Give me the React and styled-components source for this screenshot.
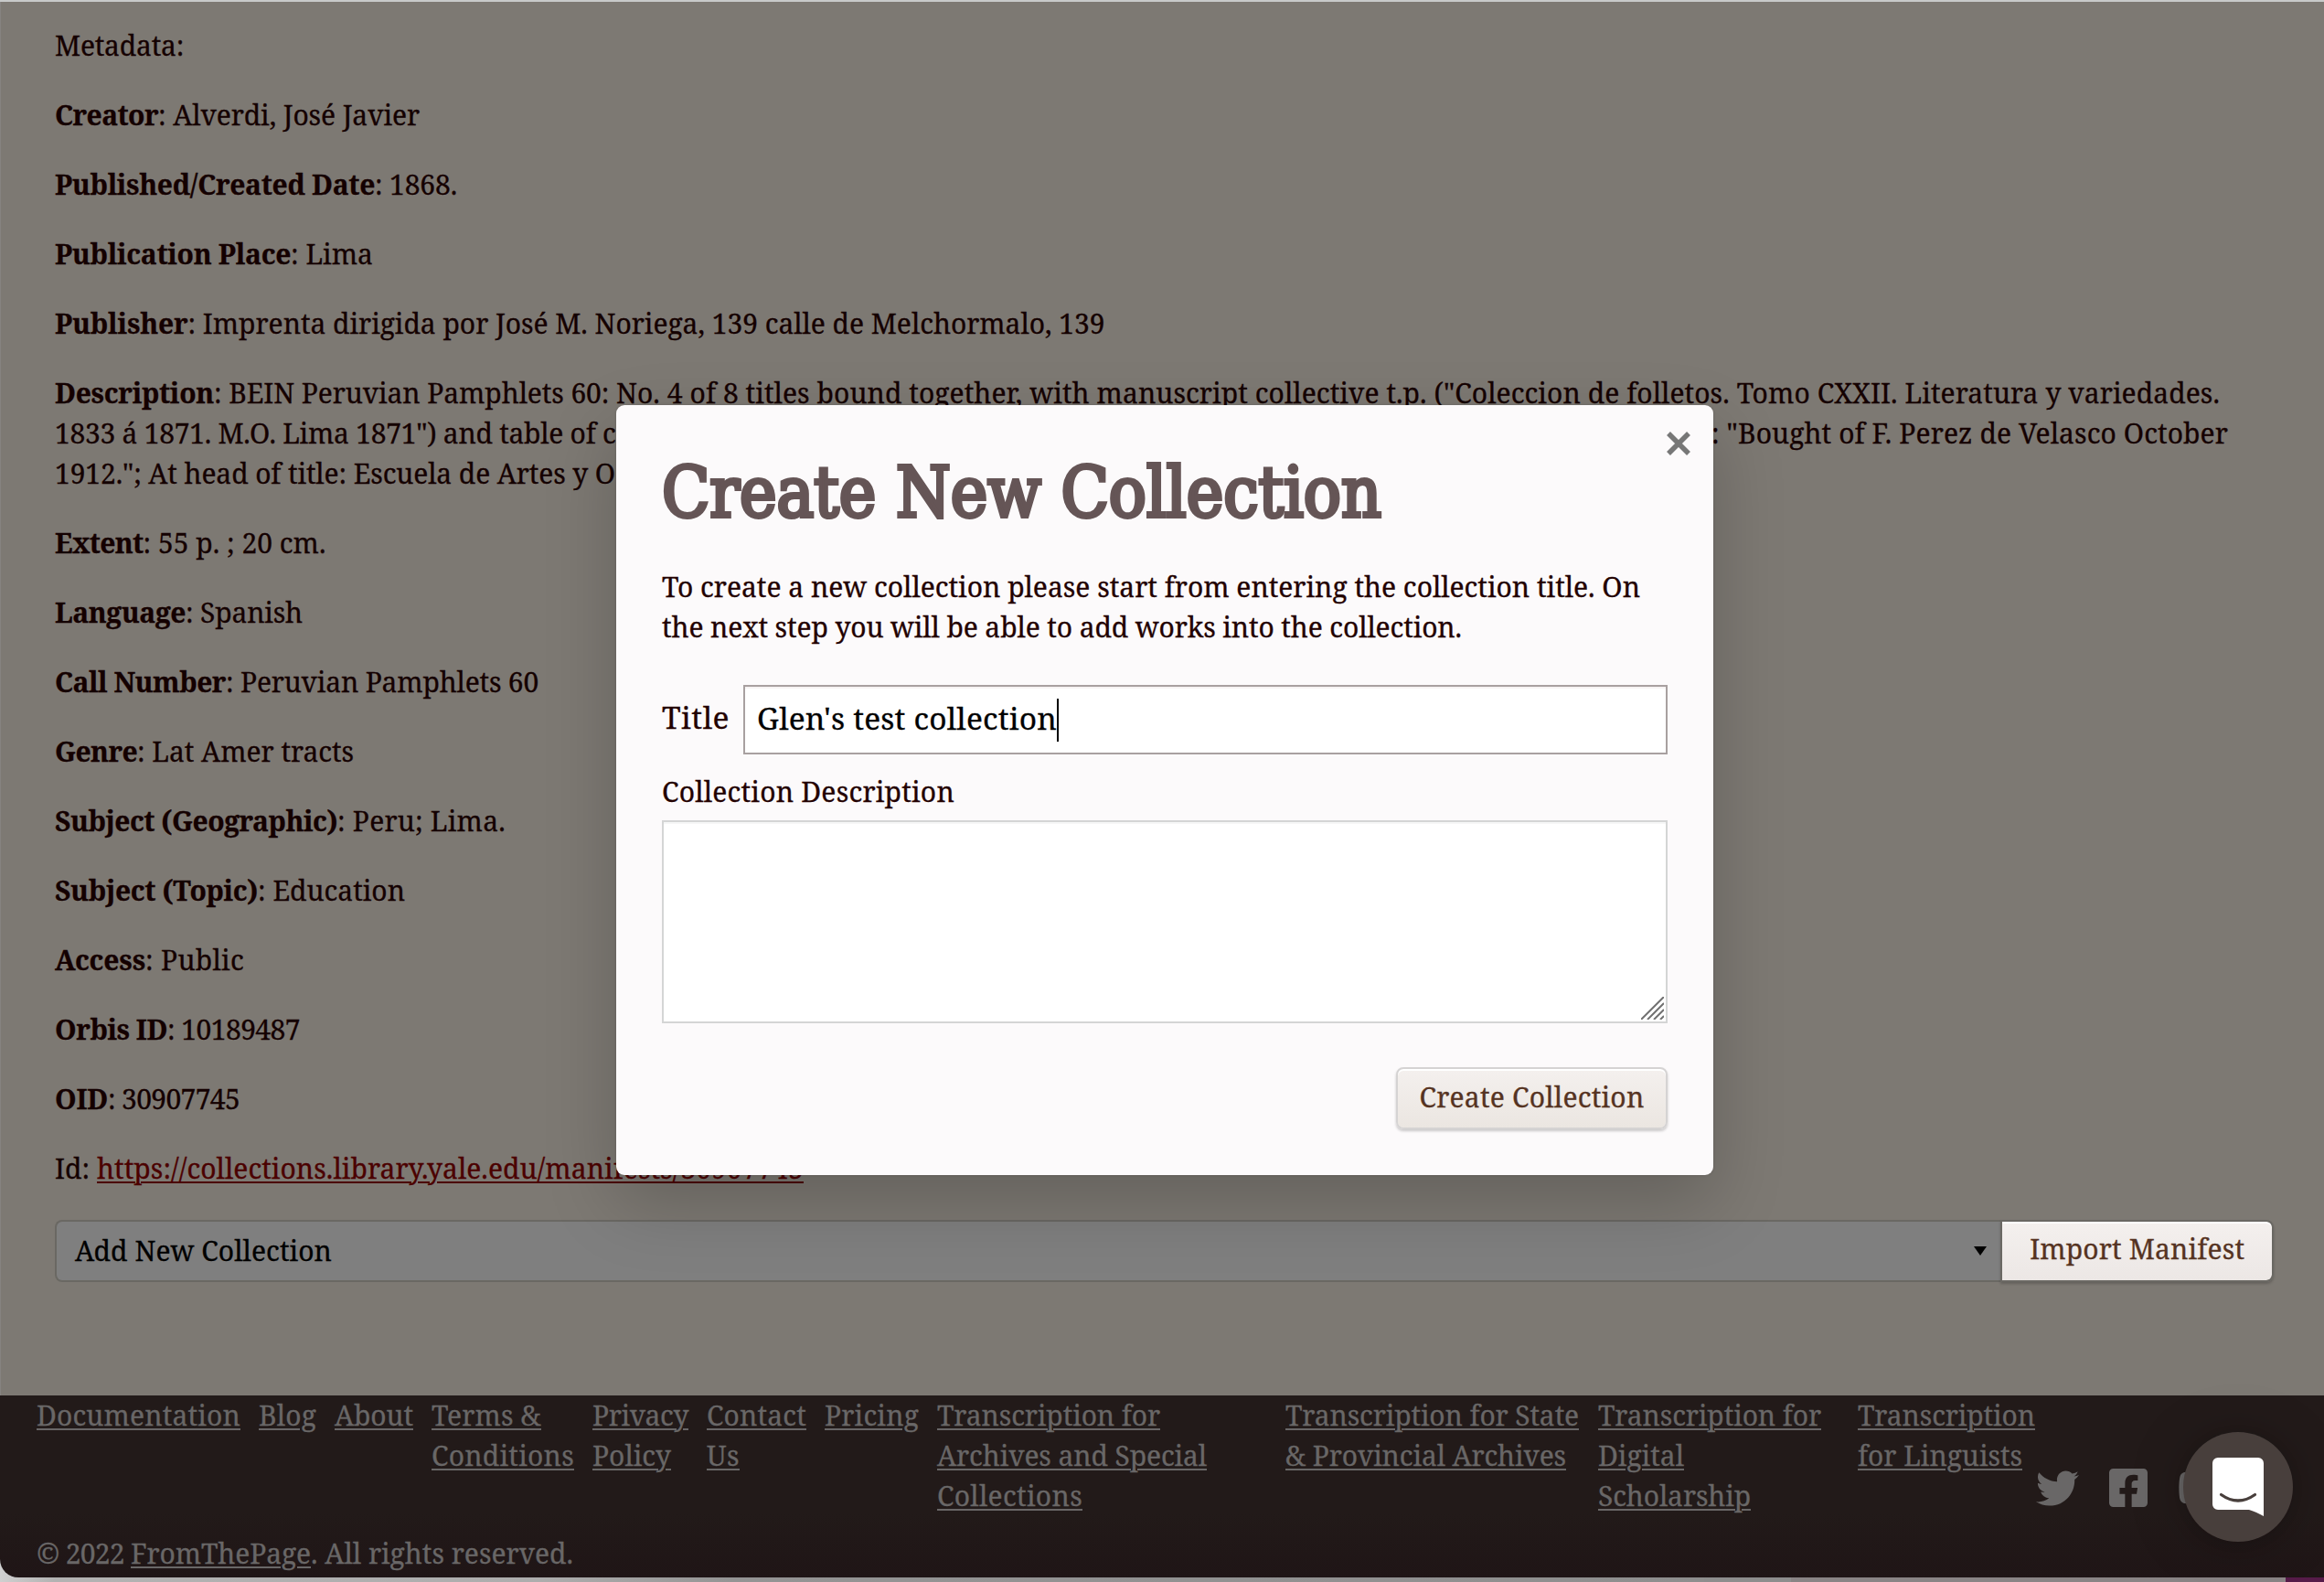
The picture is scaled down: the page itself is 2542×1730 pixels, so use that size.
import React, { useLayoutEffect, useRef, useState } from 'react';
import styled, { createGlobalStyle, css } from 'styled-components';
import { FaTwitter, FaFacebookSquare, FaYoutube } from 'react-icons/fa';

const Global = createGlobalStyle`
  *, *::before, *::after { box-sizing: border-box; }
  body { margin: 0; overflow: hidden; background: #b0b0b0; }
`;

const serif = css`
  font-family: "Noto Serif", "DejaVu Serif Condensed", "DejaVu Serif", serif;
`;

const underline = css`
  text-decoration: underline;
  text-decoration-thickness: 2px;
  text-underline-offset: 3px;
`;

const Text = styled.span`
  display: inline-block;
  white-space: pre;
  font-weight: ${(p) => (p.$bold ? 700 : 400)};
  ${(p) => p.$link && underline}
`;

/* Spreads its letters so that the text takes exactly `w` pixels. */
function Fit({ w, bold, link, children }) {
  const ref = useRef(null);
  const [spacing, setSpacing] = useState(0);
  useLayoutEffect(() => {
    const natural = ref.current.getBoundingClientRect().width;
    setSpacing((w - natural) / children.length);
  }, []);
  return (
    <Text ref={ref} $bold={bold} $link={link} style={{ letterSpacing: `${spacing}px` }}>
      {children}
    </Text>
  );
}

const Page = styled.div`
  ${serif}
  position: relative;
  display: flex;
  flex-direction: column;
  width: 2542px;
  height: 1730px;
  border-top: 2px solid #c8caca;
  font-size: 30px;
  line-height: 44px;
  color: #140000;
  -webkit-text-stroke: 0.3px currentColor;
  overflow: hidden;
`;

const Main = styled.main`
  display: flex;
  flex-direction: column;
  height: 1524px;
  padding: 26px 55px 0 59px;
  background: #7d7973;
  border-left: 1px solid #868380;
`;

const Field = styled.p`
  margin: 0 0 32px;
  white-space: nowrap;
`;

const Line = styled.span`
  display: flex;
  height: 44px;
`;

const Covered = styled.span`
  flex: 0 0 auto;
  width: ${(p) => p.$w}px;
  overflow: hidden;
`;

const SourceLink = styled.a`
  color: #4b0000;
`;

const ImportRow = styled.div`
  display: flex;
  margin-top: 2px;
  height: 68px;
`;

const Select = styled.div`
  display: flex;
  align-items: center;
  justify-content: space-between;
  width: 2130px;
  padding: 0 15px 0 20px;
  border: 2px solid #6a6863;
  border-right: 0;
  border-radius: 8px 0 0 8px;
  background: #7f7f7f;
  color: #000;
`;

const Caret = styled.span`
  border: 7px solid transparent;
  border-top: 10px solid #000;
  border-bottom: 0;
`;

const Button = styled.button`
  ${serif}
  display: flex;
  justify-content: center;
  align-items: center;
  width: ${(p) => p.$w}px;
  height: 68px;
  padding: 0 0 ${(p) => p.$lift}px;
  border: 2px solid ${(p) => p.$border};
  border-radius: ${(p) => p.$radius};
  background: linear-gradient(#f4f0ee, ${(p) => p.$end});
  background-clip: padding-box;
  box-shadow: inset 0 2px 0 #fff, 0 2px 3px rgba(0, 0, 0, 0.2);
  font-size: 30px;
  line-height: 44px;
  color: #553322;
  -webkit-text-stroke: 0.3px currentColor;
`;

const Footer = styled.footer`
  height: 199px;
  padding-left: 40px;
  border-radius: 0 0 0 20px;
  background: linear-gradient(#221a19 65%, #1f1516);
  color: #696767;
`;

const Nav = styled.nav`
  display: flex;
  height: 132px;
`;

const NavItem = styled.a`
  display: flex;
  flex-direction: column;
  align-items: flex-start;
  width: ${(p) => p.$w}px;
`;

const Social = styled.div`
  display: flex;
  align-items: center;
  gap: 33px;
  height: 48px;
  margin: 77px 0 0 1px;
  svg { display: block; flex: none; }
`;

const Copyright = styled.div`
  margin-top: 19px;
  white-space: nowrap;
`;

const Backdrop = styled.div`
  background: linear-gradient(90deg, #d0d0d0, #b2b2b2 60px);
`;

const Behind = styled.div`
  display: grid;
  grid-template-columns: 96px 1768px 95px 541px 42px;
  height: 30px;
  margin-top: -25px;
  position: relative;
  z-index: -1;
  background: #a9a9a9;
`;

const Pane = styled.div`
  background: ${(p) => p.$bg};
  border-right: ${(p) => (p.$rule ? '1px solid #8e8e8e' : '0')};
`;

const Modal = styled.section`
  position: absolute;
  left: 674px;
  top: 441px;
  width: 1200px;
  height: 842px;
  padding: 56px 50px 50px;
  display: flex;
  flex-direction: column;
  border-radius: 9px;
  background: #fcfafb;
  box-shadow: 0 30px 80px rgba(0, 0, 0, 0.2), 0 0 3px rgba(0, 0, 0, 0.15);
  color: #220000;
`;

const Close = styled.button`
  position: absolute;
  top: 27px;
  right: 24px;
  padding: 0;
  border: 0;
  background: none;
  line-height: 0;
`;

const Heading = styled.h1`
  margin: 0 0 41px;
  font: 400 76px/80px "DejaVu Serif Condensed", "DejaVu Serif", serif;
  color: #655556;
  -webkit-text-stroke: 4px #655556;
`;

const Intro = styled.p`
  display: flex;
  flex-direction: column;
  align-items: flex-start;
  margin: 0 0 41px;
`;

const TitleRow = styled.label`
  display: flex;
  height: 76px;
  font-size: 33.5px;
  line-height: 71px;
`;

const TitleLabel = styled.span`
  width: 89px;
`;

const Input = styled.div`
  flex: 1;
  display: flex;
  align-items: center;
  padding: 0 0 4px 13px;
  border: 2px solid #a8a0a0;
  background: #fff;
  box-shadow: inset 0 2px 0 #f7f3f3;
  color: #000;
`;

const TextCursor = styled.span`
  width: 2px;
  height: 47px;
  margin-top: 4px;
  background: #000;
`;

const Caption = styled.div`
  margin: 19px 0 9px;
`;

const Area = styled.div`
  display: flex;
  align-items: flex-end;
  justify-content: flex-end;
  height: 222px;
  padding: 2px;
  border: 2px solid #d4d5d5;
  background: #fff;
  box-shadow: inset 0 2px 0 #f6f6f6;
  svg { display: block; }
`;

const Actions = styled.div`
  display: flex;
  justify-content: flex-end;
  margin-top: 48px;
`;

const Chat = styled.button`
  position: absolute;
  left: 2388px;
  top: 1564px;
  width: 120px;
  height: 120px;
  display: flex;
  align-items: center;
  justify-content: center;
  padding: 0;
  border: 0;
  border-radius: 50%;
  background: #483f3c;
  box-shadow: 0 2px 12px rgba(0, 0, 0, 0.12), 0 4px 64px rgba(0, 0, 0, 0.2);
`;

const before = [
  ['Creator', 113, ': Alverdi, José Javier', 286],
  ['Published/Created Date', 350, ': 1868.', 90],
  ['Publication Place', 258, ': Lima', 90],
  ['Publisher', 145.5, ': Imprenta dirigida por José M. Noriega, 139 calle de Melchormalo, 139', 1003],
];

const after = [
  ['Extent', 96.5, ': 55 p. ; 20 cm.', 200],
  ['Language', 143, ': Spanish', 128],
  ['Call Number', 187, ': Peruvian Pamphlets 60', 342],
  ['Genre', 90, ': Lat Amer tracts', 237],
  ['Subject (Geographic)', 309, ': Peru; Lima.', 184],
  ['Subject (Topic)', 222, ': Education', 161],
  ['Access', 99, ': Public', 108],
  ['Orbis ID', 123, ': 10189487', 145],
  ['OID', 58, ': 30907745', 144],
];

const links = [
  [243, ['Documentation', 223]],
  [83, ['Blog', 63]],
  [106, ['About', 86]],
  [176, ['Terms &', 120], ['Conditions', 156]],
  [125, ['Privacy', 105], ['Policy', 86]],
  [129, ['Contact', 109], ['Us', 36]],
  [123, ['Pricing', 103]],
  [381, ['Transcription for', 244], ['Archives and Special', 295], ['Collections', 159]],
  [342, ['Transcription for State', 321], ['& Provincial Archives', 307]],
  [284, ['Transcription for', 244], ['Digital', 94], ['Scholarship', 167]],
  [194, ['Transcription', 194], ['for Linguists', 180]],
];

const MetaField = ({ item: [label, lw, value, vw] }) => (
  <Field>
    <Fit bold w={lw}>{label}</Fit>
    <Fit w={vw}>{value}</Fit>
  </Field>
);

export default function App() {
  return (
    <Page>
      <Global />
      <Main>
        <Field><Fit w={141}>Metadata:</Fit></Field>
        {before.map((item) => <MetaField key={item[0]} item={item} />)}
        <Field as="div">
          <Line>
            <Fit bold w={174}>Description</Fit>
            <Fit w={440}>{': BEIN Peruvian Pamphlets 60: '}</Fit>
            <Fit w={1754}>{'No. 4 of 8 titles bound together, with manuscript collective t.p. ("Coleccion de folletos. Tomo CXXII. Literatura y variedades.'}</Fit>
          </Line>
          <Line>
            <Fit w={599}>{'1833 á 1871. M.O. Lima 1871") and table of '}</Fit>
            <Covered $w={1213}>c</Covered>
            <Fit w={565}>{': "Bought of F. Perez de Velasco October'}</Fit>
          </Line>
          <Line>
            <Fit w={613}>{'1912."; At head of title: Escuela de Artes y O'}</Fit>
          </Line>
        </Field>
        {after.map((item) => <MetaField key={item[0]} item={item} />)}
        <Field>
          <Fit w={46}>{'Id: '}</Fit>
          <SourceLink>
            <Fit link w={773}>https://collections.library.yale.edu/manifests/30907745</Fit>
          </SourceLink>
        </Field>
        <ImportRow>
          <Select>
            <Fit w={281}>Add New Collection</Fit>
            <Caret />
          </Select>
          <Button $w={299} $lift={4} $border="#6a6863" $radius="0 8px 8px 0" $end="#ece7e5">
            <Fit w={235}>Import Manifest</Fit>
          </Button>
        </ImportRow>
      </Main>
      <Footer>
        <Nav>
          {links.map(([w, ...lines], i) => (
            <NavItem key={i} $w={w}>
              {lines.map(([text, tw]) => <Fit key={text} link w={tw}>{text}</Fit>)}
            </NavItem>
          ))}
          <Social>
            <FaTwitter size={47} />
            <FaFacebookSquare style={{ width: 42, height: 48 }} />
            <FaYoutube style={{ width: 54, height: 48 }} />
          </Social>
        </Nav>
        <Copyright>
          <Fit w={103}>{'© 2022 '}</Fit>
          <Fit link w={197}>FromThePage</Fit>
          <Fit w={287}>. All rights reserved.</Fit>
        </Copyright>
      </Footer>
      <Behind>
        <Backdrop />
        <Pane $bg="linear-gradient(90deg, #b2b2b2, #adadad 28%, #949494 40%, #8e8e8e)" $rule />
        <Pane $bg="#8d8d8d" $rule />
        <Pane $bg="#898485" />
        <Pane $bg="#561b49" />
      </Behind>
      <Modal>
        <Close aria-label="Close">
          <svg width="28" height="30" viewBox="0 0 28 30" fill="none" stroke="#777" strokeWidth="5.5">
            <path d="M3 4 25 26M25 4 3 26" />
          </svg>
        </Close>
        <Heading><Fit w={787}>Create New Collection</Fit></Heading>
        <Intro>
          <Fit w={1070}>To create a new collection please start from entering the collection title. On</Fit>
          <Fit w={875}>the next step you will be able to add works into the collection.</Fit>
        </Intro>
        <TitleRow>
          <TitleLabel><Fit w={74}>Title</Fit></TitleLabel>
          <Input>
            <Fit w={328}>Glen's test collection</Fit>
            <TextCursor />
          </Input>
        </TitleRow>
        <Caption><Fit w={320}>Collection Description</Fit></Caption>
        <Area>
          <svg width="25" height="25" viewBox="0 0 25 25" stroke="#717171" strokeWidth="2">
            <path d="M0 25 25 0M7 25 25 7M14 25 25 14M21 25 25 21" />
          </svg>
        </Area>
        <Actions>
          <Button $w={297} $lift={3} $border="#d5d3d3" $radius="8px" $end="#ebe6e1">
            <Fit w={246}>Create Collection</Fit>
          </Button>
        </Actions>
      </Modal>
      <Chat aria-label="Chat">
        <svg width="56" height="64" viewBox="0 0 56 64">
          <path d="M6 0H50a6 6 0 0 1 6 6V64Q47 59 40 57H6a6 6 0 0 1-6-6V6a6 6 0 0 1 6-6Z" fill="#fff" />
          <path d="M9.500 40.500Q28 53.500 46.500 40.500" fill="none" stroke="#483f3c" strokeWidth="3.200" strokeLinecap="round" />
        </svg>
      </Chat>
    </Page>
  );
}
